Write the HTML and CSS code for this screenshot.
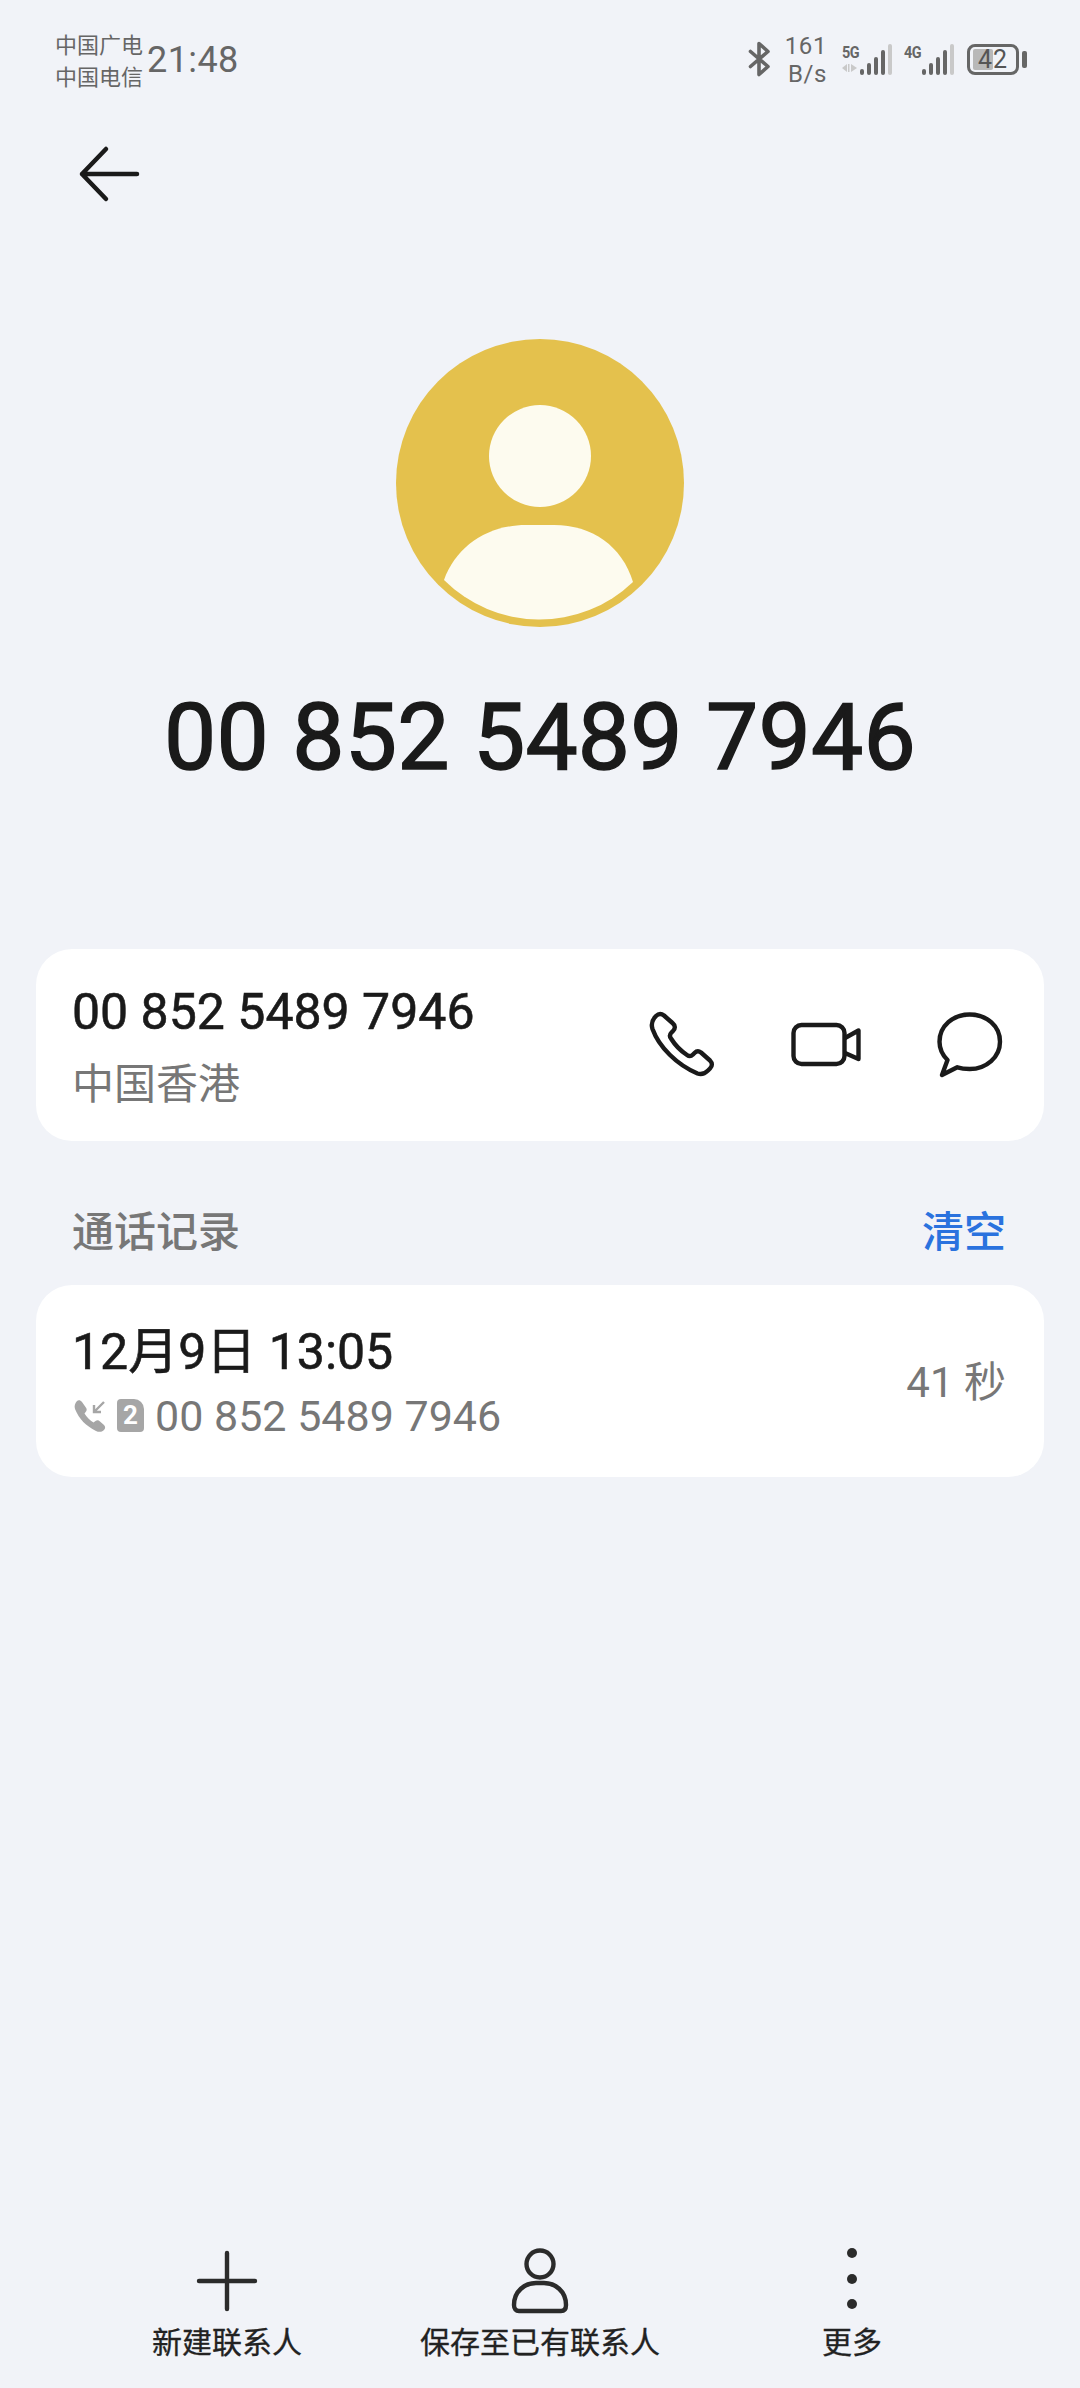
FILE: index.html
```html
<!DOCTYPE html>
<html lang="zh-CN">
<head>
    <meta charset="UTF-8">
    <meta name="viewport" content="width=device-width, initial-scale=1.0">
    <title>通话详情</title>
    <link rel="stylesheet" href="styles.css">
</head>
<body>
    <div class="page">
        <div class="status-bar">
            <div class="carrier">
                <span>中国广电</span>
                <span>中国电信</span>
            </div>
            <div class="clock">21:48</div>
            <div class="status-right">
                <svg class="bt-icon" width="24" height="36" viewBox="0 0 24 36">
                    <path d="M2.5 10.5 L20 25.5 L11 33.5 V2.5 L20 10.5 L2.5 25.5" fill="none" stroke="#666" stroke-width="3.6" stroke-linecap="round" stroke-linejoin="round"/>
                </svg>
                <div class="speed">
                    <span>161</span>
                    <span>B/s</span>
                </div>
                <div class="signal signal-5g">
                    <div class="net-type">
                        <span>5G</span>
                        <svg width="16" height="10" viewBox="0 0 16 10">
                            <path d="M0 5 L5 1 V9 Z M6 1 H7.5 V9 H6 Z M9 1 L15 5 L9 9 Z" fill="#c9c9c9"/>
                        </svg>
                    </div>
                    <div class="bars">
                        <i class="b1"></i><i class="b2"></i><i class="b3"></i><i class="b4"></i><i class="b5"></i>
                    </div>
                </div>
                <div class="signal signal-4g">
                    <div class="net-type">
                        <span>4G</span>
                    </div>
                    <div class="bars">
                        <i class="b1"></i><i class="b2"></i><i class="b3"></i><i class="b4"></i><i class="b5"></i>
                    </div>
                </div>
                <div class="battery">
                    <div class="battery-body">
                        <div class="battery-fill"></div>
                        <span>42</span>
                    </div>
                    <div class="battery-cap"></div>
                </div>
            </div>
        </div>

        <div class="nav">
            <svg width="64" height="60" viewBox="0 0 64 60">
                <path d="M28 4 L4 29 L28 54 M4 29 H59" fill="none" stroke="#1a1a1a" stroke-width="4.5" stroke-linecap="round" stroke-linejoin="round"/>
            </svg>
        </div>

        <div class="profile">
            <svg class="avatar" width="288" height="288" viewBox="0 0 288 288">
                <circle cx="144" cy="144" r="144" fill="#e4c14d"/>
                <circle cx="144" cy="117" r="51" fill="#fdfbef"/>
                <path d="M48 241 C60 207 92 186 130 186 H158 C196 186 226 207 237 243 A135 135 0 0 1 48 241 Z" fill="#fdfbef"/>
            </svg>
            <h1>00 852 5489 7946</h1>
        </div>

        <div class="card number-card">
            <div class="card-text">
                <div class="number">00 852 5489 7946</div>
                <div class="sub">中国香港</div>
            </div>
            <div class="actions">
                <svg width="72" height="72" viewBox="0 0 72 72">
                    <path d="M10 7 C12.5 4.5 15.5 4.5 18 6.5 L26.5 14 C29.5 16.5 29.5 19.5 27 22 L25.5 23.5 C23.5 25.5 23.5 27.5 25 29.5 C29 36 35 42 41 46 C43 47.5 45 47.5 47 45.5 L48.5 44 C50.5 42 53 42 55 43.5 L64 51.5 C66.5 54 66.5 57 64 59.5 L62 61.5 C59 64.5 55.5 66 51.5 64.5 C31 56 13 38 6.5 20 C5 15.5 6 11 10 7 Z" fill="none" stroke="#1a1a1a" stroke-width="4.4" stroke-linejoin="round"/>
                </svg>
                <svg width="72" height="72" viewBox="0 0 72 72">
                    <rect x="3.5" y="16" width="51" height="39" rx="8" fill="none" stroke="#1a1a1a" stroke-width="4.4"/>
                    <path d="M55 29 L68.5 21.5 V50 L55 44" fill="none" stroke="#1a1a1a" stroke-width="4.4" stroke-linejoin="round"/>
                </svg>
                <svg width="72" height="72" viewBox="0 0 72 72">
                    <path d="M13.5 51 C8.5 46 5.5 39.5 5.5 32.7 C5.5 17 19 5.5 35.7 5.5 C52.5 5.5 66 17 66 32.7 C66 48 52.5 60 35.7 60 C31 60 27 59.5 23.3 58.3 L8 66 Z" fill="none" stroke="#1a1a1a" stroke-width="4.4" stroke-linejoin="round"/>
                </svg>
            </div>
        </div>

        <div class="section-head">
            <span class="section-title">通话记录</span>
            <span class="section-link">清空</span>
        </div>

        <div class="card log-card">
            <div class="card-text">
                <div class="log-date">12月9日 13:05</div>
                <div class="log-detail">
                    <svg width="32" height="34" viewBox="0 0 32 34">
                        <path d="M3 2 C1 4 0 7 1 10 C5 20 12 27 22 32 C25 33.5 28 33 30 31 C31.5 29.5 31.5 27.5 30 26 L26 22.5 C24.5 21 23 21 21.5 22 L19.5 23.5 C16 21.5 12.5 18 10.5 14.5 L12 12.5 C13 11 13 9.5 11.5 8 L8 3 C6.5 1 4.5 0.5 3 2 Z" fill="#a6a6a6"/>
                        <path d="M30 3 L20 13 M20 6 V13 H27" fill="none" stroke="#a6a6a6" stroke-width="2.4"/>
                    </svg>
                    <div class="sim-badge">2</div>
                    <span class="log-number">00 852 5489 7946</span>
                </div>
            </div>
            <div class="log-duration">41 秒</div>
        </div>

        <div class="spacer"></div>

        <div class="bottom-bar">
            <div class="tool tool-add">
                <svg width="64" height="64" viewBox="0 0 64 64">
                    <path d="M32 4 V60 M4 32 H60" fill="none" stroke="#2b2b2b" stroke-width="4.4" stroke-linecap="round"/>
                </svg>
                <span>新建联系人</span>
            </div>
            <div class="tool tool-save">
                <svg width="64" height="68" viewBox="0 0 64 68">
                    <circle cx="32" cy="17" r="13.5" fill="none" stroke="#2b2b2b" stroke-width="4.4"/>
                    <path d="M6 58 C6 44 17 36 28 36 H36 C47 36 58 44 58 58 C58 62 56 64 53 64 H11 C8 64 6 62 6 58 Z" fill="none" stroke="#2b2b2b" stroke-width="4.4" stroke-linejoin="round"/>
                </svg>
                <span>保存至已有联系人</span>
            </div>
            <div class="tool tool-more">
                <svg width="64" height="64" viewBox="0 0 64 64">
                    <circle cx="32" cy="6" r="5" fill="#2b2b2b"/>
                    <circle cx="32" cy="32" r="5" fill="#2b2b2b"/>
                    <circle cx="32" cy="57" r="5" fill="#2b2b2b"/>
                </svg>
                <span>更多</span>
            </div>
        </div>
    </div>
</body>
</html>
```

FILE: styles.css
```css
body {
    margin: 0;
    background-color: #f1f3f8;
    font-family: Roboto, "Noto Sans CJK SC", sans-serif;
    color: #1a1a1a;
}
.page {
    height: 2388px;
    display: flex;
    flex-direction: column;
    overflow: hidden;
}
.status-bar {
    height: 100px;
    padding: 28px 53px 0 55px;
    box-sizing: border-box;
    display: flex;
    align-items: flex-start;
    color: #666;
}
.carrier {
    display: flex;
    flex-direction: column;
    font-size: 22px;
    line-height: 32px;
    margin-top: 2px;
}
.clock {
    font-size: 36px;
    line-height: 42px;
    margin: 11px 0 0 4px;
    letter-spacing: 0.4px;
}
.status-right {
    margin-left: auto;
    display: flex;
    align-items: flex-start;
}
.bt-icon {
    margin-top: 13px;
}
.speed {
    display: flex;
    flex-direction: column;
    align-items: flex-end;
    font-size: 24px;
    line-height: 28px;
    letter-spacing: 0.6px;
    margin: 4px 0 0 13px;
}
.signal {
    display: flex;
    align-items: flex-end;
    height: 32px;
    margin-top: 15px;
}
.signal-5g {
    margin-left: 15px;
}
.signal-4g {
    margin-left: 12px;
}
.net-type {
    width: 18px;
    align-self: flex-start;
    display: flex;
    flex-direction: column;
    font-size: 17px;
    line-height: 16px;
    font-weight: 700;
    letter-spacing: -0.5px;
    padding-top: 1px;
    color: #666;
}
.net-type span {
    display: block;
    transform: scaleX(0.85);
    transform-origin: left;
}
.net-type svg {
    margin-top: 3px;
}
.bars {
    display: flex;
    align-items: flex-end;
    gap: 3px;
    height: 32px;
}
.bars i {
    display: block;
    width: 4px;
    background: #666;
    border-radius: 2px;
}
.bars .b1 { height: 6px; }
.bars .b2 { height: 12px; }
.bars .b3 { height: 18px; }
.bars .b4 { height: 25px; }
.bars .b5 { height: 31px; background: #c9c9c9; }
.battery {
    display: flex;
    align-items: center;
    gap: 3px;
    margin: 16px 0 0 13px;
}
.battery-body {
    position: relative;
    width: 52px;
    height: 31px;
    box-sizing: border-box;
    border: 3px solid #666;
    border-radius: 8px;
    display: flex;
    align-items: center;
    justify-content: center;
    font-size: 25px;
    color: #555;
}
.battery-body span {
    position: relative;
    letter-spacing: 1px;
}
.battery-fill {
    position: absolute;
    left: 3px;
    top: 2px;
    bottom: 2px;
    width: 20px;
    background: #b8b8b8;
    border-radius: 2px;
}
.battery-cap {
    width: 5px;
    height: 17px;
    background: #666;
    border-radius: 2px;
}
.nav {
    height: 110px;
    padding: 45px 0 0 78px;
    box-sizing: border-box;
}
.profile {
    margin-top: 129px;
    display: flex;
    flex-direction: column;
    align-items: center;
}
.profile h1 {
    margin: 53px 0 0;
    font-size: 93px;
    line-height: 116px;
    font-weight: 400;
    letter-spacing: 0.2px;
    color: #1a1a1a;
    -webkit-text-stroke: 1.5px #1a1a1a;
}
.card {
    margin: 0 36px;
    height: 192px;
    padding: 0 36px;
    background: white;
    border-radius: 36px;
    display: flex;
    align-items: center;
    justify-content: space-between;
}
.number-card {
    margin-top: 153px;
}
.number-card .card-text {
    padding-top: 4px;
}
.number {
    font-size: 50px;
    line-height: 64px;
    font-weight: 400;
    -webkit-text-stroke: 0.6px #1a1a1a;
}
.sub {
    font-size: 42px;
    line-height: 60px;
    color: #777;
    margin-top: 11px;
}
.actions {
    display: flex;
    gap: 72px;
    margin-right: 2px;
}
.actions svg {
    display: block;
}
.section-head {
    margin: 62px 36px 0;
    padding: 0 36px;
    height: 82px;
    display: flex;
    justify-content: space-between;
    font-size: 42px;
    line-height: 60px;
    font-weight: 500;
}
.section-title {
    color: #777;
}
.section-link {
    color: #2a72de;
    margin-right: 2px;
}
.log-date {
    font-size: 50px;
    line-height: 62px;
    font-weight: 400;
    -webkit-text-stroke: 0.6px #1a1a1a;
    padding-top: 2px;
}
.log-detail {
    display: flex;
    align-items: center;
    margin-top: 5px;
    padding-left: 2px;
}
.sim-badge {
    width: 27px;
    height: 33px;
    margin-left: 11px;
    background: #a6a6a6;
    border-radius: 4px 10px 4px 4px;
    color: white;
    font-size: 26px;
    line-height: 33px;
    font-weight: 700;
    text-align: center;
}
.log-number {
    margin-left: 11px;
    font-size: 43px;
    line-height: 56px;
    color: #777;
}
.log-duration {
    font-size: 42px;
    color: #777;
    margin: 0 2px 6px 0;
}
.spacer {
    flex: 1;
}
.bottom-bar {
    height: 141px;
    display: grid;
    grid-template-columns: 227px 313px 312px;
    box-sizing: border-box;
}
.tool {
    display: flex;
    flex-direction: column;
    align-items: center;
    font-size: 30px;
    line-height: 40px;
    color: #222;
    -webkit-text-stroke: 0.3px #222;
    width: 0;
    justify-self: end;
    white-space: nowrap;
}
.tool svg {
    display: block;
    height: 68px;
    margin-bottom: 8px;
}
.tool-more svg {
    height: 64px;
    margin-bottom: 12px;
}
```
